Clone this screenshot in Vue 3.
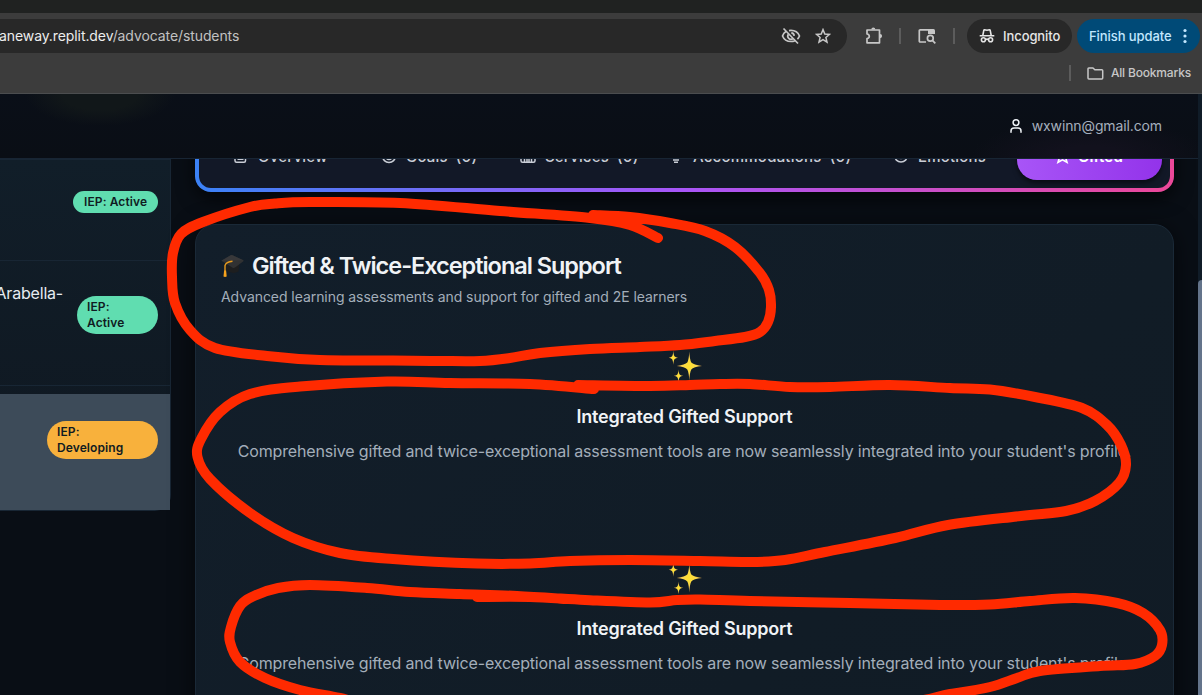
<script setup>
const tabs = [
  { label: 'Overview', icon: 'doc' },
  { label: 'Goals (0)', icon: 'target' },
  { label: 'Services (0)', icon: 'case' },
  { label: 'Accommodations (0)', icon: 'bulb' },
  { label: 'Emotions', icon: 'smile' },
]

const sections = [1, 2]

const strokes = [
  [[593,215],[630,217],[670,223],[705,231],[735,247],[760,273],[769,290],[771,307],[768,322],[760,332],[745,337],[715,341],[680,345],[640,347],[590,349],[540,353],[510,358],[480,361],[440,361],[393,360.5],[320,360],[267,356],[215,348],[190,330],[175,303],[172,277],[173,253],[181,234],[203,222],[250,207],[275,203.5],[310,202],[400,203],[500,211],[590,218],[630,225],[658,238]],
  [[578,385],[650,386],[690,385],[720,384],[750,384],[790,387],[830,387],[890,385],[950,388],[990,389.5],[1035,397],[1082,408],[1107,425],[1121,445],[1126,465],[1119,483],[1095,501],[1066,511],[1021,516],[948,525],[895,538],[825,552],[785,560],[750,562],[700,561],[630,560],[570,561],[530,563.5],[477,563.5],[393,559],[340,553],[293,538],[250,513],[210,479],[197.500,457],[201,439],[220,412],[250,394],[300,386.500],[387,381.500],[450,383],[530,384],[594,389]],
  [[477,597],[530,597],[585,600],[650,602.5],[677,600],[700,599.5],[750,601],[850,603],[940,605],[990,604.5],[1030,601],[1075,598],[1117,603],[1143,613],[1160,630],[1162,645],[1155,656],[1135,664],[1100,666],[1040,671],[1017,678],[990,687],[950,694],[880,704],[600,714],[400,710],[340,698],[300,690],[265,678],[240,662],[230,642],[231,627],[240,606],[254,596],[278,588],[310,585],[367,588],[410,592],[460,594],[517,596],[567,599]],
]

function smooth(p) {
  let d = `M${p[0][0]} ${p[0][1]}`
  for (let i = 0; i < p.length - 1; i++) {
    const a = p[i - 1] || p[i], b = p[i], c = p[i + 1], e = p[i + 2] || c
    d += `C${b[0] + (c[0] - a[0]) / 6} ${b[1] + (c[1] - a[1]) / 6} ${c[0] - (e[0] - b[0]) / 6} ${c[1] - (e[1] - b[1]) / 6} ${c[0]} ${c[1]}`
  }
  return d
}
</script>

<template>
  <div class="screen">
    <div class="strip"></div>
    <div class="toolbar">
      <div class="omnibox">
        <span class="url"><b>aneway.replit.dev</b>/advocate/students</span>
        <svg class="eye" width="20" height="18" viewBox="0 0 20 18" fill="none" stroke="#c7c7c7" stroke-width="1.7">
          <path d="M5 4.6C3.400 5.500 2.200 7 1.500 9c1.400 3.500 4.600 5.500 8.500 5.500 1.500 0 2.800-.3 4-.8M8 3.600c.6-.1 1.300-.2 2-.2 3.900 0 7.100 2.100 8.500 5.600-.5 1.200-1.200 2.300-2.100 3.100M2.500 1.500l14.500 15" />
          <path d="M7.400 7.200a3.200 3.200 0 0 0 4.400 4.500M10.300 5.900a3.200 3.200 0 0 1 2.900 3" />
        </svg>
        <svg width="16" height="16" viewBox="0 0 16 16" fill="none" stroke="#c7c7c7" stroke-width="1.500">
          <path d="M8 1.600l1.800 4.400 4.700.4-3.600 3.100 1.100 4.600L8 11.600l-4 2.500 1.100-4.600-3.600-3.100 4.700-.4z" />
        </svg>
      </div>
      <svg class="puzzle" width="18" height="18" viewBox="0 0 18 18">
        <path d="M2 3h12.500v12.800H2V11.500c1.500-.2 2.300-1 2.300-2.200S3.500 7.200 2 7z" fill="none" stroke="#c7c7c7" stroke-width="1.700" stroke-linejoin="round" />
        <path d="M6.300 2.500a2 2 0 0 1 4 0zM15 7a2 2 0 0 1 0 4.200z" fill="#c7c7c7" />
      </svg>
      <i class="bar b1"></i>
      <svg class="tabsearch" width="18" height="16" viewBox="0 0 18 16" fill="none" stroke="#c7c7c7" stroke-width="1.700">
        <path d="M8 14H2.200Q1.300 14 1.300 13V2.700Q1.300 1.800 2.200 1.800H10" />
        <path d="M10 1h5.500q1.500 0 1.500 1.500V6h-7z" fill="#c7c7c7" stroke="none" />
        <circle cx="12.300" cy="10.300" r="2.900" /><path d="M14.400 12.300l2.900 3" />
      </svg>
      <i class="bar b2"></i>
      <div class="pill incog">
        <svg width="16" height="16" viewBox="0 0 16 16" fill="none" stroke="#e6e6e6" stroke-width="1.600">
          <path d="M.7 7.800h14.600M3.800 7.500l1-5.200q.1-.6.700-.5L8 2.300l2.500-.5q.6-.1.700.5l1 5.200" />
          <circle cx="4.400" cy="11.800" r="2" /><circle cx="11.600" cy="11.800" r="2" /><path d="M6.500 11.500q1.500-.8 3 0" />
        </svg>
        <span>Incognito</span>
      </div>
      <div class="pill update">
        <span>Finish update</span>
        <svg width="4" height="16" viewBox="0 0 4 16" fill="#c2e7ff"><circle cx="2" cy="2.500" r="1.600" /><circle cx="2" cy="8" r="1.600" /><circle cx="2" cy="13.500" r="1.600" /></svg>
      </div>
    </div>
    <div class="bookmarks">
      <i class="bar"></i>
      <svg width="17" height="13" viewBox="0 0 17 13" fill="none" stroke="#c7c7c7" stroke-width="1.500" stroke-linejoin="round"><path d="M1 1.800Q1 1 1.800 1H6l1.800 1.800h7Q15.700 2.800 15.700 3.600V11q0 1-.9 1H1.900Q1 12 1 11z" /></svg>
      <span>All Bookmarks</span>
    </div>

    <div class="page">
      <header class="top">
        <svg width="14" height="16" viewBox="0 0 14 16" fill="none" stroke="#eef2f6" stroke-width="1.500" stroke-linecap="round"><circle cx="7" cy="4.600" r="2.900" /><path d="M2 14.200v-1.200q0-3 3-3h4q3 0 3 3v1.200" /></svg>
        <span>wxwinn@gmail.com</span>
      </header>

      <div class="body">
        <aside class="side">
          <div class="student s1"><span class="badge">IEP: Active</span></div>
          <div class="student s2"><span class="name">Arabella-</span><span class="badge two">IEP:<br>Active</span></div>
          <div class="student s3"><span class="badge two dev">IEP:<br>Developing</span></div>
        </aside>

        <main class="main">
          <nav class="tabs">
            <div class="tabs-in">
              <div v-for="t in tabs" :key="t.label" class="tab" :class="t.icon">
                <svg width="16" height="16" viewBox="0 0 16 16" fill="none" stroke="#c9cdd6" stroke-width="1.500">
                  <template v-if="t.icon === 'doc'"><rect x="2" y="2" width="10.500" height="12.200" rx="1.500" /><path d="M4.500 8h6M4.500 11.200h6" /></template>
                  <template v-else-if="t.icon === 'target'"><circle cx="8" cy="8" r="6.500" /><circle cx="8" cy="8" r="3.500" /><circle cx="8" cy="8" r="1" /></template>
                  <template v-else-if="t.icon === 'case'"><rect x="1" y="3" width="14" height="11.200" rx="1.500" /><path d="M4.500 3v11M11.500 3v11M7 14V9.500h2V14" /></template>
                  <template v-else-if="t.icon === 'bulb'"><path d="M5 12h6M6 14.300h4M5.500 10a4.500 4.500 0 1 1 5 0" /></template>
                  <template v-else><circle cx="8" cy="7.500" r="6.500" /><path d="M5.500 9.500q2.500 2 5 0" /></template>
                </svg>
                <span>{{ t.label }}</span>
              </div>
              <div class="tab active">
                <svg width="13" height="16" viewBox="0 0 13 16" fill="none" stroke="#fff" stroke-width="1.600"><path d="M6.500 2l1.500 4 4 .3-2.500 3 1.500 5-4.500-2.500L2 14.300l1.500-5-2.500-3L5 6z" /></svg>
                <span>Gifted</span>
              </div>
            </div>
          </nav>

          <section class="card">
            <h1>
              <svg width="23" height="24" viewBox="0 0 23 24">
                <path d="M5 10v6q6 5 12.500 1.500l1-8z" fill="#1d1e1f" />
                <path d="M.3 6.800L9.600 1.200q1-.6 2 0l10.800 5q.6.4 0 1L14 13.500q-1.100.8-2.300.2z" fill="#303132" />
                <path d="M.3 6.800L9.600 1.200q1-.6 2 0l10.800 5z" fill="#3d3e3f" opacity=".6" />
                <path d="M11.500 7.200Q5 7.800 4 11.500L4 17" fill="none" stroke="#e69a1d" stroke-width="1.400" />
                <path d="M3.100 16.500h2l.6 6q-1.700.8-3.200 0z" fill="#f5a21d" />
              </svg>
              <span>Gifted &amp; Twice-Exceptional Support</span>
            </h1>
            <p class="sub">Advanced learning assessments and support for gifted and 2E learners</p>
            <div v-for="s in sections" :key="s" class="support">
              <svg width="34" height="34" viewBox="0 0 34 34">
                <defs><radialGradient id="gold"><stop offset="0" stop-color="#ffe22e" /><stop offset=".5" stop-color="#fbd84a" /><stop offset="1" stop-color="#e9a94f" /></radialGradient></defs>
                <g fill="url(#gold)">
                  <path d="M21.300 2.500Q21.700 10.500 23.300 13.600 25.500 16 34 17 25.500 18 23.300 20.400 21.700 23.500 21.300 31.500 20.900 23.500 19.300 20.400 17 18 8.800 17 17 16 19.300 13.600 20.900 10.500 21.300 2.500z" />
                  <path d="M5.300 1.500Q5.600 6.600 6.700 7.500 7.800 8.300 10 8.700 7.800 9.100 6.700 9.900 5.600 11 5.300 15.800 5 11 3.900 9.900 2.800 9.100.8 8.700 2.800 8.300 3.900 7.500 5 6.600 5.300 1.500z" />
                  <path d="M10.500 20.500Q10.800 24.800 11.900 25.700 13 26.500 15.200 26.800 13 27.200 11.900 28 10.800 29 10.500 33 10.200 29 9.100 28 8 27.200 5.800 26.800 8 26.500 9.100 25.700 10.200 24.800 10.500 20.500z" />
                </g>
              </svg>
              <h2>Integrated Gifted Support</h2>
              <p>Comprehensive gifted and twice-exceptional assessment tools are now seamlessly integrated into your student's profile.</p>
            </div>
          </section>
        </main>
      </div>
      <div class="scroll"><div class="thumb"></div></div>
    </div>

    <svg class="ink" width="1202" height="695" viewBox="0 0 1202 695" fill="none" stroke="#ff2a00" stroke-width="10" stroke-linecap="round" stroke-linejoin="round">
      <path v-for="(s, i) in strokes" :key="i" :d="smooth(s)" />
    </svg>
  </div>
</template>

<style>
html, body { margin: 0; background: #090e15; }
</style>

<style scoped>
* { box-sizing: border-box; }
.screen { position: relative; width: 1202px; height: 695px; overflow: hidden; display: flex; flex-direction: column; font-family: Inter, "Liberation Sans", sans-serif; white-space: nowrap; }
svg { display: block; flex: none; }
.strip { height: 13px; background: #202221; flex: none; }
.toolbar { height: 46px; flex: none; background: #3c3c3c; display: flex; align-items: flex-start; padding-top: 6px; color: #e6e6e6; font-size: 13px; font-weight: 500; letter-spacing: -.08px; }
.omnibox { width: 847px; height: 34px; flex: none; background: #282828; border-radius: 0 17px 17px 0; display: flex; align-items: center; padding-right: 16px; }
.url { flex: 1; font-size: 14px; font-weight: 400; color: #c2c2c2; margin-left: -1px; padding-bottom: 2px; letter-spacing: -.09px; }
.url b { font-weight: 400; color: #ededed; }
.eye { margin-right: 14px; }
.puzzle { margin: 8px 0 0 18px; }
.bar { width: 2px; height: 16px; background: #5c5c5c; flex: none; }
.toolbar .bar { margin-top: 9px; }
.b1 { margin-left: 16px; }
.tabsearch { margin: 9px 0 0 17px; }
.b2 { margin-left: 17px; }
.pill { height: 34px; border-radius: 17px; display: flex; align-items: center; flex: none; }
.incog { width: 105px; margin-left: 12px; background: #282828; padding-left: 12px; gap: 8px; }
.update { width: 123px; margin-left: 5px; background: #004a77; color: #c2e7ff; padding-left: 12px; gap: 11px; }
.bookmarks { height: 35px; flex: none; background: #3c3c3c; border-bottom: 1px solid #4b4d4f; display: flex; align-items: center; justify-content: flex-end; padding: 0 11px 7px 0; color: #c7c7c7; font-size: 12px; font-weight: 500; letter-spacing: -.17px; }
.bookmarks svg { margin: 1px 7px 0 16px; }
.bookmarks span { padding-bottom: 1px; }
.page { position: relative; flex: 1; min-height: 0; background: #090e15; overflow: hidden; }
.top { position: relative; z-index: 2; height: 65px; border-bottom: 1px solid #182534; display: flex; align-items: center; justify-content: flex-end; padding: 0 40px 1px 0; gap: 9px; color: #a5afbd; font-size: 14px; letter-spacing: -.12px;
  background: radial-gradient(ellipse 75px 32px at 100px 0, #111719 50%, transparent 100%), radial-gradient(ellipse 120px 40px at 1090px 64px, #12111d 30%, transparent 100%), linear-gradient(#0a0f18, #0a0e15); }
.body { display: flex; gap: 24px; align-items: flex-start; height: 536px; }
.side { width: 171px; height: 352px; flex: none; background: linear-gradient(#111e29, #0f1720); border: 1px solid #182634; border-left: 0; border-radius: 0 0 16px 0; }
.student { display: flex; justify-content: flex-end; align-items: flex-start; padding-right: 12px; }
.s1 { height: 101px; padding-top: 31px; border-bottom: 1px solid #182634; }
.s2 { height: 125px; padding-top: 35px; border-bottom: 1px solid #182634; }
.s3 { height: 116px; margin-top: 8px; padding-top: 27px; background: #3d4b59; }
.badge { flex: none; background: #60ddb0; color: #101b22; font-size: 12px; font-weight: 600; line-height: 16px; padding: 3px 0 3px 11px; border-radius: 19px; width: 85px; height: 22px; letter-spacing: .1px; }
.badge.two { width: 81px; height: 38px; padding-left: 10px; }
.badge.dev { width: 111px; background: #f8b13c; }
.name { flex: none; color: #e6ebf1; font-size: 16px; line-height: 24px; margin: -15px 14px 0 0; letter-spacing: -.2px; }
.main { width: 979px; height: 536px; flex: none; }
.tabs { height: 64px; margin-top: -31px; padding: 4px; border-radius: 16px; background: linear-gradient(90deg, #3b82f6, #a855f7 50%, #ec4899); box-shadow: 0 6px 18px #000a; }
.tabs-in { height: 56px; background: #121827; border-radius: 12px; display: flex; align-items: center; padding: 0 8px 8px 34px; color: #c9cdd6; font-size: 15px; font-weight: 500; letter-spacing: .18px; word-spacing: 4px; }
.tab { display: flex; align-items: center; gap: 9px; flex: none; }
.doc { width: 148px; }
.target { width: 139px; }
.case { width: 148px; }
.bulb { width: 225px; letter-spacing: .22px; }
.smile { width: 124px; }
.active { width: 145px; height: 44px; border-radius: 20px; margin-top: 4px; padding-bottom: 4px; justify-content: center; color: #fff; font-weight: 600; background: linear-gradient(90deg, #a855f7, #9333ea); box-shadow: 0 3px 5px #0008; }
.card { margin-top: 32px; height: 700px; border: 1px solid #1a2937; border-radius: 20px; background: linear-gradient(135deg, #121e2a, #111c26 60%, #111b25); box-shadow: 0 4px 24px #0009; padding: 25px; }
h1 { margin: 0; height: 32px; display: flex; align-items: center; gap: 8px; color: #f0f3f6; font-size: 23.5px; font-weight: 600; line-height: 32px; letter-spacing: -1.03px; }
.sub { margin: 4px 0 0; font-size: 14px; line-height: 22px; color: #a3aeba; letter-spacing: -.06px; }
.support { height: 212px; padding-top: 41px; display: flex; flex-direction: column; align-items: center; }
.support h2 { margin: 20px 0 0; color: #f0f3f6; font-size: 18px; line-height: 28px; font-weight: 600; letter-spacing: -.2px; }
.support p { margin: 8px 0 0; color: #a3aeba; font-size: 16px; line-height: 24px; letter-spacing: -.153px; }
.scroll { position: absolute; z-index: 3; top: 0; right: 0; width: 4px; height: 601px; background: #101c28; padding-top: 186px; }
.thumb { height: 415px; background: #64748b; border-radius: 4px 0 0 0; }
.ink { position: absolute; z-index: 5; left: 0; top: 0; pointer-events: none; }
</style>
